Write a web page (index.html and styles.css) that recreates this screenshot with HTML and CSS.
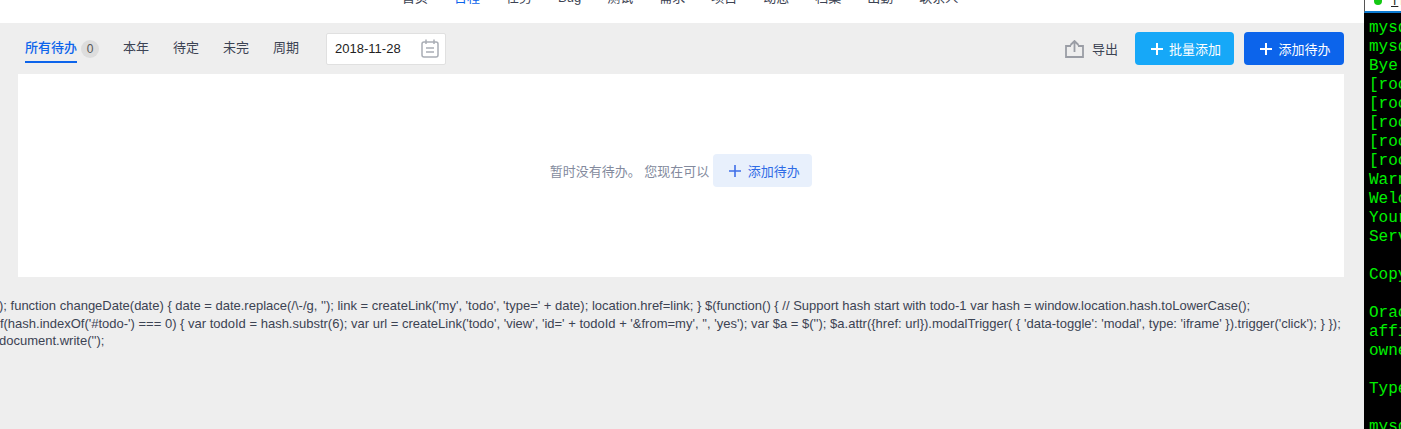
FILE: index.html
```html
<!DOCTYPE html>
<html lang="zh">
<head>
<meta charset="utf-8">
<title>所有待办</title>
<link rel="stylesheet" href="styles.css">
</head>
<body>
<div class="page">
  <main class="main">
    <header class="header">
      <nav class="nav">
        <a>首页</a><a class="on">日程</a><a>任务</a><a>Bug</a><a>测试</a><a>需求</a><a>项目</a><a>动态</a><a>档案</a><a>出勤</a><a>联系人</a>
      </nav>
    </header>
    <div class="content">
      <div class="toolbar">
        <div class="tabs">
          <a class="tab active">所有待办</a><span class="count">0</span>
          <a class="tab first">本年</a><a class="tab">待定</a><a class="tab">未完</a><a class="tab">周期</a>
          <div class="date">
            <span>2018-11-28</span>
            <svg class="cal" width="18" height="19" viewBox="0 0 18 19" fill="none" stroke="#a9adb5" stroke-width="1.5"><path d="M3 3H15Q17 3 17 5V16Q17 18 15 18H3Q1 18 1 16V5Q1 3 3 3Z"/><path d="M5 .5V5M13 .5V5M5 9H13M5 13H13"/></svg>
          </div>
        </div>
        <div class="actions">
          <svg class="export" width="19" height="18" viewBox="0 0 19 18" fill="none" stroke="#9a9da5" stroke-width="1.8"><path d="M6 6H1V17H18V6H13"/><path d="M9.500 12V1.500M5.500 5L9.500 1L13.500 5"/></svg>
          <a class="export-label">导出</a>
          <a class="btn sky"><svg width="12" height="12" viewBox="0 0 12 12" stroke="#fff" stroke-width="2"><path d="M6 0V12M0 6H12"/></svg>批量添加</a>
          <a class="btn blue"><svg width="12" height="12" viewBox="0 0 12 12" stroke="#fff" stroke-width="2"><path d="M6 0V12M0 6H12"/></svg>添加待办</a>
        </div>
      </div>
      <section class="panel">
        <span class="empty">暂时没有待办。 您现在可以</span>
        <a class="btn soft"><svg width="12" height="12" viewBox="0 0 12 12" stroke="#3f6fe8" stroke-width="1.600"><path d="M6 0V12M0 6H12"/></svg>添加待办</a>
      </section>
      <div class="code">
        <div class="l1">); function changeDate(date) { date = date.replace(/\-/g, ''); link = createLink('my', 'todo', 'type=' + date); location.href=link; } $(function() { // Support hash start with todo-1 var hash = window.location.hash.toLowerCase();</div>
        <div class="l2">if(hash.indexOf('#todo-') === 0) { var todoId = hash.substr(6); var url = createLink('todo', 'view', 'id=' + todoId + '&amp;from=my', '', 'yes'); var $a = $(''); $a.attr({href: url}).modalTrigger( { 'data-toggle': 'modal', type: 'iframe' }).trigger('click'); } });</div>
        <div class="l3">document.write('');</div>
      </div>
    </div>
  </main>
  <aside class="term">
    <div class="term-bar"><i class="dot"></i><u>T</u><span>F</span></div>
    <pre class="term-text">mysql
mysql
Bye
[root
[root
[root
[root
[root
Warning
Welcome
Your
Server

Copyright

Oracle
affiliates
owners

Type

mysql</pre>
  </aside>
</div>
</body>
</html>
```
FILE: styles.css
```css
* { box-sizing: border-box; }
html, body { margin: 0; height: 429px; overflow: hidden; }
body { font-family: "Liberation Sans", "Noto Sans CJK SC", sans-serif; font-size: 13px; color: #3c4353; background: #eee; }
.page { display: flex; height: 429px; }
.main { width: 1364px; flex: none; display: flex; flex-direction: column; overflow: hidden; }
.header { height: 23px; flex: none; background: #fff; overflow: hidden; }
.nav { display: flex; gap: 26px; margin: -12px 0 0 402px; line-height: 20px; }
.nav a { color: #3c4353; }
.nav .on { color: #0c64eb; }
.content { flex: 1; min-height: 0; }
.toolbar { display: flex; justify-content: space-between; align-items: center; height: 51px; padding: 0 20px 0 25px; }
.tabs { display: flex; align-items: center; height: 32px; }
.tab { color: #3c4353; margin-right: 24px; height: 28px; line-height: 26px; }
.tab.active { color: #0c64eb; font-weight: 500; margin-right: 4px; border-bottom: 2px solid #0c64eb; }
.count { width: 18px; height: 18px; border-radius: 50%; background: #ddd; color: #555; font-size: 12px; line-height: 18px; text-align: center; margin-right: 24px; }
.date { display: flex; align-items: center; justify-content: space-between; width: 120px; height: 32px; margin-left: 3px; padding: 0 6px 0 8px; background: #fff; border: 1px solid #e0e0e0; border-radius: 2px; font-size: 13px; color: #222; }
.actions { display: flex; align-items: center; }
.export-label { margin: 0 17px 0 8px; color: #3c4353; }
.btn { display: flex; align-items: center; justify-content: center; gap: 6px; height: 33px; border-radius: 4px; color: #fff; padding-left: 3px; }
.sky { width: 99px; background: #16a8f8; margin-right: 10px; }
.blue { width: 100px; background: #0c64eb; }
.panel { display: flex; align-items: center; justify-content: center; height: 203px; margin: 0 20px 0 18px; background: #fff; padding-bottom: 10px; }
.empty { color: #838a9d; margin-right: 4px; }
.soft { width: 99px; background: #e8f0fc; color: #2e6be6; gap: 7px; }
.code { margin-top: 20px; font-size: 13px; line-height: 17.5px; color: #3c4353; white-space: nowrap; }
.l1 { margin-left: -1px; }
.l2 { margin-left: -3px; }
.l3 { margin-left: -1px; }
.term { flex: 1; min-width: 0; background: #000; overflow: hidden; }
.term-bar { height: 13px; background: #fff; border-bottom: 2px solid #0c7ad0; border-left: 1px solid #555; font-size: 12px; line-height: 12px; color: #222; padding-left: 9px; display: flex; gap: 2px; overflow: hidden; }
.term-bar u { margin: -5px 0 0 7px; }
.term-bar span { margin: -5px 0 0 0; }
.dot { width: 8px; height: 8px; margin-top: -3px; border-radius: 50%; flex: none; background: #14c814; }
.term-text { margin: 0; padding: 6px 0 0 5px; font-family: "Liberation Mono", monospace; font-size: 16px; line-height: 19px; color: #00f000; }
```
